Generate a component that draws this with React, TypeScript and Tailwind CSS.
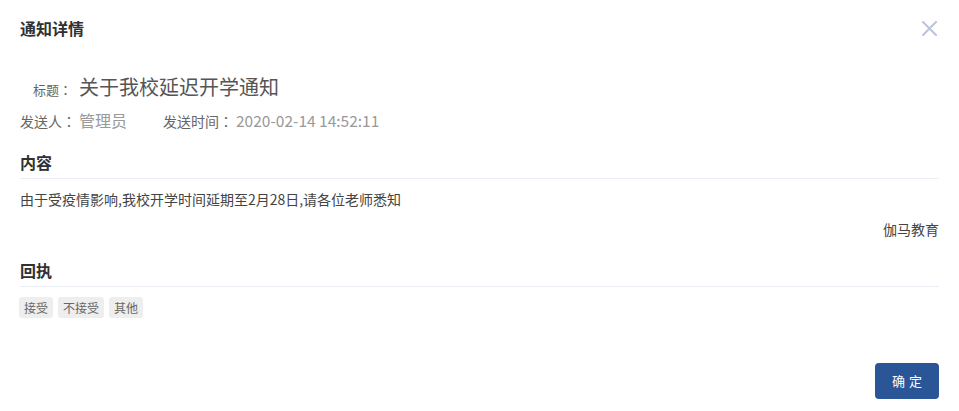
import React from "react";

const font = { fontFamily: '"Noto Sans CJK SC", "Noto Sans", sans-serif' };
const colon = { fontFamily: '"Noto Sans CJK TC", "Noto Sans CJK SC", sans-serif' };

function C() {
  return <span style={colon}>：</span>;
}

export default function App() {
  return (
    <div
      className="w-[959px] h-[411px] bg-white flex flex-col text-[#333]"
      style={font}
    >
      <div className="h-[56px] flex items-center justify-between pl-5 pr-[22px]">
        <div className="text-[16px] leading-[20px] font-bold text-[#303133]">通知详情</div>
        <svg width="15" height="15" viewBox="0 0 15 15" className="text-[#bcc4d8] mt-px">
          <path d="M1 1 L14 14 M14 1 L1 14" stroke="currentColor" strokeWidth="2" strokeLinecap="round" />
        </svg>
      </div>

      <div className="px-5 flex flex-col">
        <div className="mt-[17px] h-[28px] flex items-baseline pl-[13px]">
          <span className="text-[13px] leading-[28px] text-[#666]">标题<C /></span>
          <span className="text-[20px] leading-[28px] text-[#555] ml-[7px]">关于我校延迟开学通知</span>
        </div>

        <div className="mt-[7px] h-[24px] flex items-baseline">
          <span className="text-[14px] leading-[24px] text-[#666]">发送人<C /></span>
          <span className="text-[16px] leading-[24px] text-[#999] ml-[3px]">管理员</span>
          <span className="text-[14px] leading-[24px] text-[#666] ml-[36px]">发送时间<C /></span>
          <span className="text-[15.5px] leading-[24px] text-[#999] ml-[3px]">2020-02-14 14:52:11</span>
        </div>

        <div className="mt-[18px] pb-[4px] border-b border-[#ebeef5]">
          <div className="text-[16px] leading-[24px] font-bold text-[#303133]">内容</div>
        </div>

        <div className="mt-[10px] text-[14px] leading-[20px] text-[#444]">
          由于受疫情影响,我校开学时间延期至2月28日,请各位老师悉知
        </div>
        <div className="mt-[10px] text-[14px] leading-[20px] text-[#444] text-right">伽马教育</div>

        <div className="mt-[19px] pb-[4px] border-b border-[#ebeef5]">
          <div className="text-[16px] leading-[24px] font-bold text-[#303133]">回执</div>
        </div>

        <div className="mt-[10px] flex gap-[5px] -ml-px">
          <span className="h-[21px] px-[5px] rounded-[3px] bg-[#eeeeee] text-[12px] leading-[21px] text-[#666]">接受</span>
          <span className="h-[21px] px-[5px] rounded-[3px] bg-[#eeeeee] text-[12px] leading-[21px] text-[#666]">不接受</span>
          <span className="h-[21px] px-[5px] rounded-[3px] bg-[#eeeeee] text-[12px] leading-[21px] text-[#666]">其他</span>
        </div>

        <div className="mt-[45px] flex justify-end">
          <button className="w-[64px] h-[36px] rounded-[4px] bg-[#2a5596] text-white text-[13px] tracking-[4px] pl-[4px]">
            确定
          </button>
        </div>
      </div>
    </div>
  );
}
